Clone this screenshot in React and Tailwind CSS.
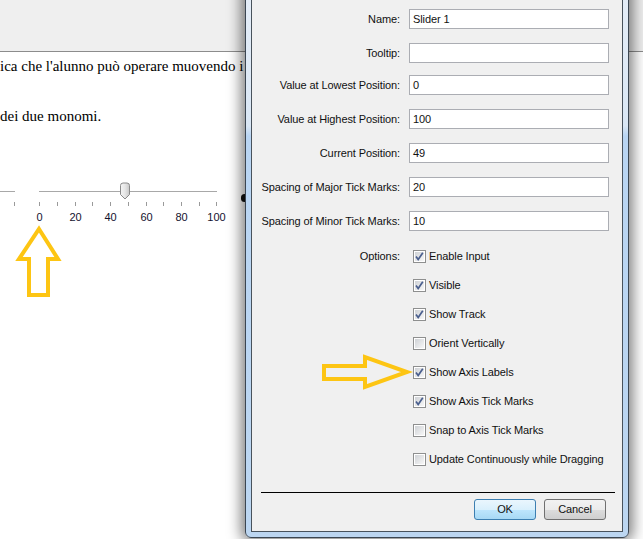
import React from "react";

const UI = "font-['Liberation_Sans',Arial,sans-serif]";

function Check({ checked }) {
  return (
    <svg width="13" height="13" viewBox="0 0 13 13" className="shrink-0">
      <defs>
        <linearGradient id="cbg" x1="0" y1="0" x2="1" y2="1">
          <stop offset="0" stopColor="#cfd2d6" />
          <stop offset="1" stopColor="#f7f7f7" />
        </linearGradient>
      </defs>
      <rect x="0.5" y="0.5" width="12" height="12" fill="#fff" stroke="#8e8f8f" />
      <rect x="2" y="2" width="9" height="9" fill="url(#cbg)" />
      {checked && (
        <path d="M3 6.4 L5.2 9.6 L9.8 2.8" fill="none" stroke="#4a5f8e" strokeWidth="1.7" strokeLinejoin="miter" />
      )}
    </svg>
  );
}

function Field({ label, value, mt }) {
  return (
    <div className={`flex items-center h-[20px] ${mt}`}>
      <div className="w-[148px] text-right whitespace-nowrap">{label}</div>
      <div className="ml-[9px] w-[200px] h-[20px] bg-white border border-[#abadb3] flex items-center pl-[3px]">
        {value}
      </div>
    </div>
  );
}

function Opt({ label, text, checked, mt }) {
  return (
    <div className={`flex items-center h-[13px] ${mt}`}>
      <div className="w-[148px] text-right whitespace-nowrap">{label}</div>
      <div className="ml-[13px] flex items-center">
        <Check checked={checked} />
        <span className="ml-[3px] whitespace-nowrap">{text}</span>
      </div>
    </div>
  );
}

function Thumb() {
  return (
    <svg width="12" height="18" viewBox="0 0 12 18" className="absolute left-[119px] top-[182px]">
      <defs>
        <linearGradient id="tg" x1="0" y1="0" x2="1" y2="0">
          <stop offset="0" stopColor="#f4f4f4" />
          <stop offset="0.5" stopColor="#e6e6e6" />
          <stop offset="1" stopColor="#c8c8c8" />
        </linearGradient>
      </defs>
      <path d="M1.5 3.5 Q1.5 1 4 1 H8 Q10.5 1 10.5 3.5 V12.5 L6 17 L1.5 12.5 Z" fill="url(#tg)" stroke="#8a8a8a" />
    </svg>
  );
}

export default function App() {
  const ticks = [14, 39, 57, 75, 92, 110, 128, 146, 163, 181, 199, 216];
  const labels = [
    [39, "0"],
    [75, "20"],
    [110, "40"],
    [146, "60"],
    [181, "80"],
    [216, "100"],
  ];
  return (
    <div className="relative w-[643px] h-[539px] overflow-hidden bg-white">
      {/* page behind */}
      <div className="h-[52px] bg-[#efefef] border-b border-[#8c8c8c]" />
      <div className="font-['Liberation_Serif','Times_New_Roman',serif] text-[15px] text-black leading-[18px]">
        <div className="mt-[5px] whitespace-nowrap">ica che l'alunno può operare muovendo i</div>
        <div className="mt-[32px] whitespace-nowrap">dei due monomi.</div>
      </div>

      {/* slider on page */}
      <div className="absolute left-0 top-[191px] w-[15px] h-px bg-[#a8a8a8]" />
      <div className="absolute left-[39px] top-[191px] w-[178px] h-px bg-[#a8a8a8]" />
      {ticks.map((x) => (
        <div key={x} className="absolute top-[202px] w-px h-[4px] bg-[#9a9a9a]" style={{ left: x }} />
      ))}
      {labels.map(([x, t]) => (
        <div
          key={t}
          className={`absolute top-[210px] w-[30px] -ml-[15px] text-center text-[11px] leading-[14px] text-[#12122e] ${UI}`}
          style={{ left: x + 0.5 }}
        >
          {t}
        </div>
      ))}
      <Thumb />
      <div className="absolute left-[241px] top-[194px] w-[7px] h-[8px] rounded-full bg-[#111]" />

      {/* dialog window */}
      <div className="absolute left-[245px] top-[-30px] w-[384px] bottom-[1px] rounded-b-[6px] rounded-t-[6px] border border-[#3b4652] bg-[linear-gradient(to_bottom,#e6eef8_0px,#dae7f5_155px,#b9d5f3_165px,#bcd6f1_100%)] pt-[28px] px-[5px] pb-[5px] flex flex-col shadow-[0_0_14px_4px_rgba(0,0,0,0.5)]">
        <div className={`flex-1 bg-[#f0f0f0] border border-[#48525c] flex flex-col text-[11px] leading-[13px] text-[#111] tracking-[-0.1px] ${UI}`}>
          <Field label="Name:" value="Slider 1" mt="mt-[9px]" />
          <Field label="Tooltip:" value="" mt="mt-[14px]" />
          <Field label="Value at Lowest Position:" value="0" mt="mt-[12px]" />
          <Field label="Value at Highest Position:" value="100" mt="mt-[14px]" />
          <Field label="Current Position:" value="49" mt="mt-[14px]" />
          <Field label="Spacing of Major Tick Marks:" value="20" mt="mt-[14px]" />
          <Field label="Spacing of Minor Tick Marks:" value="10" mt="mt-[14px]" />

          <Opt label="Options:" text="Enable Input" checked mt="mt-[19px]" />
          <Opt label="" text="Visible" checked mt="mt-[16px]" />
          <Opt label="" text="Show Track" checked mt="mt-[16px]" />
          <Opt label="" text="Orient Vertically" checked={false} mt="mt-[16px]" />
          <Opt label="" text="Show Axis Labels" checked mt="mt-[16px]" />
          <Opt label="" text="Show Axis Tick Marks" checked mt="mt-[16px]" />
          <Opt label="" text="Snap to Axis Tick Marks" checked={false} mt="mt-[16px]" />
          <Opt label="" text="Update Continuously while Dragging" checked={false} mt="mt-[16px]" />

          <div className="mt-[26px] ml-[9px] mr-[7px] h-px bg-black" />
          <div className="mt-[6px] flex justify-end gap-[8px] pr-[16px]">
            <button className="w-[62px] h-[21px] rounded-[3px] border border-[#3c7fb1] bg-[linear-gradient(to_bottom,#eaf6fd_0%,#d9f0fc_50%,#bee6fd_51%,#a7d9f5_100%)] text-[11px] text-[#111]">
              OK
            </button>
            <button className="w-[62px] h-[21px] rounded-[3px] border border-[#707070] bg-[linear-gradient(to_bottom,#f2f2f2_0%,#ebebeb_50%,#dddddd_51%,#cfcfcf_100%)] text-[11px] text-[#111]">
              Cancel
            </button>
          </div>
        </div>
      </div>

      {/* yellow arrows */}
      <svg className="absolute left-0 top-0 pointer-events-none" width="643" height="539">
        <polygon
          points="39,229 58,259 48,259 48,295 29,295 29,259 19,259"
          fill="none"
          stroke="#fdc513"
          strokeWidth="4"
          strokeLinejoin="miter"
        />
        <polygon
          points="324,366 365,366 365,357 407,372 365,387 365,379 324,379"
          fill="none"
          stroke="#fdc513"
          strokeWidth="4"
          strokeLinejoin="miter"
        />
      </svg>
    </div>
  );
}
